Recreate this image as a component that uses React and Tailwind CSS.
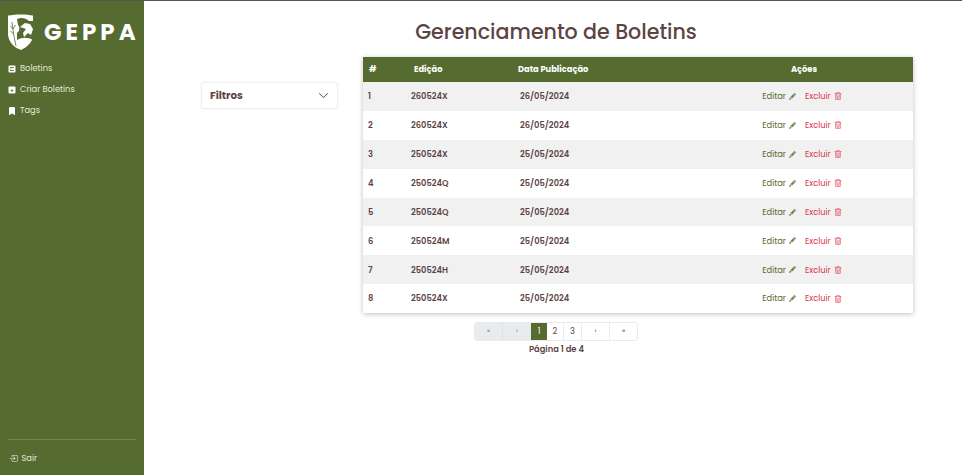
import React from 'react';
import { BsBookmarkFill, BsBoxArrowInRight, BsChevronDown, BsPencilFill, BsTrash3 } from 'react-icons/bs';

const boletins = [
  { id: 1, edicao: '260524X', data: '26/05/2024' },
  { id: 2, edicao: '260524X', data: '26/05/2024' },
  { id: 3, edicao: '250524X', data: '25/05/2024' },
  { id: 4, edicao: '250524Q', data: '25/05/2024' },
  { id: 5, edicao: '250524Q', data: '25/05/2024' },
  { id: 6, edicao: '250524M', data: '25/05/2024' },
  { id: 7, edicao: '250524H', data: '25/05/2024' },
  { id: 8, edicao: '250524X', data: '25/05/2024' },
];

const Logo = () => (
  <svg width="26" height="36" viewBox="0 0 26 36" className="shrink-0">
    <path d="M0 1.5 C8 0 18 0 25 1.5 L25 21 C25 28 19 33 13 36 C7 34 1 29 0 21 Z" fill="#fff" />
    <path d="M9 5 C13 3 18 4 21 7 L25 7 L25 26 C20 23 14 23 9 26 L9 19 C12 17 12 13 10 11 Z" fill="#556b2f" />
    <path d="M12 13 L17 9 L22 10 L25 15 L23 21 L20 19 L16 23 L15 19 L18 15 Z" fill="#fff" />
    <path d="M4 8 L5.5 20 L8 32 M2.5 12 L5 15 M7.5 11 L5 15 M2.5 17 L5.5 20" fill="none" stroke="#556b2f" strokeWidth="0.8" />
  </svg>
);

const IconeBoletins = () => (
  <svg width="8" height="8" viewBox="0 0 8 8" className="shrink-0">
    <rect x="0.5" y="0.5" width="7" height="7" rx="1" fill="#fff" />
    <path d="M2 2.5 H6 M2 4 H3.5 M2 5.5 H6" stroke="#556b2f" strokeWidth="0.8" />
  </svg>
);

const IconeCriar = () => (
  <svg width="8" height="8" viewBox="0 0 8 8" className="shrink-0">
    <rect x="0.5" y="0.5" width="7" height="7" rx="1" fill="#fff" />
    <path d="M2.7 4.5 H5.3 M4 3.2 V5.8" stroke="#556b2f" strokeWidth="0.8" />
  </svg>
);

const Sidebar = () => (
  <aside className="flex w-[144px] shrink-0 flex-col bg-[#556b2f] text-white">
    <div className="flex items-center gap-[10px] pl-2 pt-[13px]">
      <Logo />
      <span className="text-[23px] font-bold leading-[36px] tracking-[4px]">GEPPA</span>
    </div>
    <nav className="mt-[8px] flex flex-col text-[8.3px] text-[#e6e9de]">
      <a className="flex h-[21px] items-center gap-[4px] pl-[8px]"><IconeBoletins />Boletins</a>
      <a className="flex h-[21px] items-center gap-[4px] pl-[8px]"><IconeCriar />Criar Boletins</a>
      <a className="flex h-[21px] items-center gap-[4px] pl-[8px]"><BsBookmarkFill className="text-[8px] text-white" />Tags</a>
    </nav>
    <div className="mx-2 mt-auto flex h-[36px] items-center gap-[4px] border-t border-[#738550] pl-px pt-[2px] text-[8.3px] text-[#e6e9de]">
      <BsBoxArrowInRight className="text-[8.5px] text-white" />Sair
    </div>
  </aside>
);

const Tabela = () => (
  <div className="flex-1 shadow-[0_1px_5px_rgba(0,0,0,0.25)]">
    <table className="w-full table-fixed text-[8.3px] text-[#5c4444]">
      <colgroup>
        <col className="w-[44px]" />
        <col className="w-[109px]" />
        <col className="w-[179px]" />
        <col className="w-[218px]" />
      </colgroup>
      <thead className="bg-[#556b2f] text-white">
        <tr className="h-[25px]">
          <th className="pl-[6px] text-left font-bold">#</th>
          <th className="pl-[7px] text-left font-bold">Edição</th>
          <th className="pl-[2px] text-left font-bold">Data Publicação</th>
          <th className="text-center font-bold">Ações</th>
        </tr>
      </thead>
      <tbody>
        {boletins.map((b) => (
          <tr key={b.id} className="h-[28.9px] odd:bg-[#f1f1f1] even:bg-white">
            <td className="pl-[5px] font-semibold">{b.id}</td>
            <td className="pl-1 font-semibold">{b.edicao}</td>
            <td className="pl-1 font-semibold">{b.data}</td>
            <td>
              <div className="flex items-center justify-center gap-[9px] pr-[4px]">
                <span className="flex items-center gap-[3px] text-[#556b2f]">Editar <BsPencilFill className="text-[7px] opacity-80" /></span>
                <span className="flex items-center gap-[3px] text-[#dc3545]">Excluir <BsTrash3 className="text-[8px]" /></span>
              </div>
            </td>
          </tr>
        ))}
      </tbody>
    </table>
  </div>
);

const Paginacao = () => (
  <div className="mt-[9px] flex flex-col items-center">
    <div className="flex h-[19px] overflow-hidden rounded-[3px] border border-[#e8eaed] text-[8.3px] text-[#5c4444]">
      <span className="flex w-[28px] items-center justify-center border-r border-[#dee2e6] bg-[#e9ecef] text-[7px] text-[#6c757d]">«</span>
      <span className="flex w-[28px] items-center justify-center bg-[#e9ecef] text-[7px] text-[#6c757d]">‹</span>
      <span className="flex w-[16px] items-center justify-center bg-[#556b2f] text-white">1</span>
      <span className="flex w-[17px] items-center justify-center border-r border-[#e8eaed]">2</span>
      <span className="flex w-[18px] items-center justify-center border-r border-[#e8eaed]">3</span>
      <span className="flex w-[28px] items-center justify-center border-r border-[#e8eaed] text-[7px]">›</span>
      <span className="flex w-[27px] items-center justify-center text-[7px]">»</span>
    </div>
    <p className="mt-px pl-px text-[8.3px] font-semibold leading-[14px] text-[#5c4444]">Página 1 de 4</p>
  </div>
);

export default function App() {
  return (
    <div className="flex h-[475px] overflow-hidden border-t border-[#555] bg-white font-['Poppins','Inter','Liberation_Sans',sans-serif]">
      <Sidebar />
      <main className="min-w-0 flex-1 pl-[6px]">
        <h1 className="mt-[16px] h-[40px] text-center text-[20.6px] font-medium leading-[30px] text-[#5c4444]">Gerenciamento de Boletins</h1>
        <div className="flex gap-[25px] pl-[51px] pr-[49px]">
          <div className="mt-[25px] flex h-[27px] w-[137px] shrink-0 items-center justify-between self-start rounded-[3px] border border-[#f0f0f0] bg-white pl-[8px] pr-2 shadow-[0_0_2px_rgba(0,0,0,0.08)]">
            <span className="text-[10.4px] font-bold text-[#5c4444]">Filtros</span>
            <BsChevronDown className="text-[11px] text-[#5c4444]" />
          </div>
          <Tabela />
        </div>
        <Paginacao />
      </main>
    </div>
  );
}
